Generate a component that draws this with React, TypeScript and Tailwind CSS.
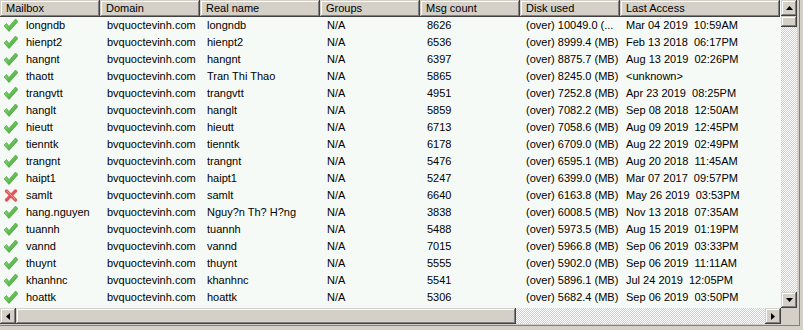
import React from "react";

type Row = {
  mailbox: string;
  realName: string;
  msgs: string;
  disk: string;
  access: string;
  ok: boolean;
};

const COLS = [
  { label: "Mailbox", w: "w-[100px]" },
  { label: "Domain", w: "w-[100px]" },
  { label: "Real name", w: "w-[120px]" },
  { label: "Groups", w: "w-[100px]" },
  { label: "Msg count", w: "w-[100px]" },
  { label: "Disk used", w: "w-[100px]" },
  { label: "Last Access", w: "w-[160px]" },
];

const ROWS: Row[] = [
  { mailbox: "longndb", realName: "longndb", msgs: "8626", disk: "(over) 10049.0 (...", access: "Mar 04 2019  10:59AM", ok: true },
  { mailbox: "hienpt2", realName: "hienpt2", msgs: "6536", disk: "(over) 8999.4 (MB)", access: "Feb 13 2018  06:17PM", ok: true },
  { mailbox: "hangnt", realName: "hangnt", msgs: "6397", disk: "(over) 8875.7 (MB)", access: "Aug 13 2019  02:26PM", ok: true },
  { mailbox: "thaott", realName: "Tran Thi Thao", msgs: "5865", disk: "(over) 8245.0 (MB)", access: "<unknown>", ok: true },
  { mailbox: "trangvtt", realName: "trangvtt", msgs: "4951", disk: "(over) 7252.8 (MB)", access: "Apr 23 2019  08:25PM", ok: true },
  { mailbox: "hanglt", realName: "hanglt", msgs: "5859", disk: "(over) 7082.2 (MB)", access: "Sep 08 2018  12:50AM", ok: true },
  { mailbox: "hieutt", realName: "hieutt", msgs: "6713", disk: "(over) 7058.6 (MB)", access: "Aug 09 2019  12:45PM", ok: true },
  { mailbox: "tienntk", realName: "tienntk", msgs: "6178", disk: "(over) 6709.0 (MB)", access: "Aug 22 2019  02:49PM", ok: true },
  { mailbox: "trangnt", realName: "trangnt", msgs: "5476", disk: "(over) 6595.1 (MB)", access: "Aug 20 2018  11:45AM", ok: true },
  { mailbox: "haipt1", realName: "haipt1", msgs: "5247", disk: "(over) 6399.0 (MB)", access: "Mar 07 2017  09:57PM", ok: true },
  { mailbox: "samlt", realName: "samlt", msgs: "6640", disk: "(over) 6163.8 (MB)", access: "May 26 2019  03:53PM", ok: false },
  { mailbox: "hang.nguyen", realName: "Nguy?n Th? H?ng", msgs: "3838", disk: "(over) 6008.5 (MB)", access: "Nov 13 2018  07:35AM", ok: true },
  { mailbox: "tuannh", realName: "tuannh", msgs: "5488", disk: "(over) 5973.5 (MB)", access: "Aug 15 2019  01:19PM", ok: true },
  { mailbox: "vannd", realName: "vannd", msgs: "7015", disk: "(over) 5966.8 (MB)", access: "Sep 06 2019  03:33PM", ok: true },
  { mailbox: "thuynt", realName: "thuynt", msgs: "5555", disk: "(over) 5902.0 (MB)", access: "Sep 06 2019  11:11AM", ok: true },
  { mailbox: "khanhnc", realName: "khanhnc", msgs: "5541", disk: "(over) 5896.1 (MB)", access: "Jul 24 2019  12:05PM", ok: true },
  { mailbox: "hoattk", realName: "hoattk", msgs: "5306", disk: "(over) 5682.4 (MB)", access: "Sep 06 2019  03:50PM", ok: true },
  { mailbox: "", realName: "", msgs: "", disk: "", access: "", ok: true },
];

const raised =
  "bg-[#d4d0c8] shadow-[inset_-1px_-1px_#404040,inset_1px_1px_#d4d0c8,inset_-2px_-2px_#808080,inset_2px_2px_#ffffff]";
const track =
  "bg-[repeating-conic-gradient(#d4d0c8_0%_25%,#ffffff_0%_50%)] bg-[length:2px_2px]";

function CheckIcon() {
  return (
    <svg width="14" height="13" viewBox="0 0 14 13">
      <defs>
        <linearGradient id="chk" x1="0" y1="0" x2="1" y2="1">
          <stop offset="0" stopColor="#9be58a" />
          <stop offset="1" stopColor="#2f9a22" />
        </linearGradient>
      </defs>
      <polygon points="0,7 2.5,4.5 5,7.5 11.5,0 14,2.5 5,12.5" fill="url(#chk)" stroke="#3c9a2e" strokeWidth="0.6" />
    </svg>
  );
}

function CrossIcon() {
  return (
    <svg width="14" height="13" viewBox="0 0 14 13">
      <g stroke="#e2555a" strokeWidth="3.2" strokeLinecap="round">
        <line x1="2.5" y1="2" x2="11.5" y2="11" />
        <line x1="11.5" y1="2" x2="2.5" y2="11" />
      </g>
      <g stroke="#f59a9c" strokeWidth="1" strokeLinecap="round">
        <line x1="3" y1="2" x2="11" y2="10" />
      </g>
    </svg>
  );
}

function Arrow({ dir }: { dir: "up" | "down" | "left" | "right" }) {
  const pts = {
    up: "0,4 3.5,0 7,4",
    down: "0,0 7,0 3.5,4",
    left: "4,0 4,7 0,3.5",
    right: "0,0 4,3.5 0,7",
  }[dir];
  const vert = dir === "up" || dir === "down";
  return (
    <svg width={vert ? 7 : 4} height={vert ? 4 : 7} viewBox={vert ? "0 0 7 4" : "0 0 4 7"}>
      <polygon points={pts} fill="#000" />
    </svg>
  );
}

export default function App() {
  return (
    <div className="w-[803px] h-[330px] overflow-hidden bg-[#d4d0c8] font-['Liberation_Sans',Arial,sans-serif] text-[11px] text-black">
      <div className="w-[800px] h-[326px] border-r border-b border-[#808080] flex flex-col">
        <div className="flex h-[324px] border-r-2 border-[#d4d0c8]">
          {/* list */}
          <div className="w-[781px] h-[324px] flex flex-col bg-[#f6faf6]">
            <div className="flex-1 overflow-hidden">
              <div className="flex h-[17px]">
                {COLS.map(c => (
                  <div
                    key={c.label}
                    className={`${c.w} ${raised} h-[17px] pl-[6px] flex items-center leading-none`}
                  >
                    {c.label}
                  </div>
                ))}
              </div>
              {ROWS.map((r, i) => (
                <div key={i} className="flex h-[17px] items-center leading-none whitespace-pre">
                  <div className="w-[100px] flex items-center">
                    <div className="w-[26px] pl-[4px] flex items-center">
                      {r.ok ? <CheckIcon /> : <CrossIcon />}
                    </div>
                    <span>{r.mailbox}</span>
                  </div>
                  {r.mailbox && (
                    <>
                      <div className="w-[100px] pl-[7px]">bvquoctevinh.com</div>
                      <div className="w-[120px] pl-[7px]">{r.realName}</div>
                      <div className="w-[100px] pl-[7px]">N/A</div>
                      <div className="w-[100px] pl-[7px]">{r.msgs}</div>
                      <div className="w-[100px] pl-[6px]">{r.disk}</div>
                      <div className="w-[160px] pl-[6px]">{r.access}</div>
                    </>
                  )}
                </div>
              ))}
            </div>
            {/* horizontal scrollbar */}
            <div className="h-[16px] flex">
              <div className={`${raised} w-[16px] h-[16px] flex items-center justify-center`}>
                <Arrow dir="left" />
              </div>
              <div className={`${raised} w-[500px] h-[16px]`} />
              <div className={`${track} flex-1 h-[16px]`} />
              <div className={`${raised} w-[16px] h-[16px] flex items-center justify-center`}>
                <Arrow dir="right" />
              </div>
            </div>
          </div>
          {/* vertical scrollbar */}
          <div className="w-[16px] flex flex-col">
            <div className={`${raised} w-[16px] h-[16px] flex items-center justify-center`}>
              <Arrow dir="up" />
            </div>
            <div className={`${raised} w-[16px] h-[11px]`} />
            <div className={`${track} flex-1`} />
            <div className={`${raised} w-[16px] h-[16px] flex items-center justify-center`}>
              <Arrow dir="down" />
            </div>
            <div className="h-[16px] bg-[#d4d0c8]" />
          </div>
        </div>
      </div>
    </div>
  );
}
